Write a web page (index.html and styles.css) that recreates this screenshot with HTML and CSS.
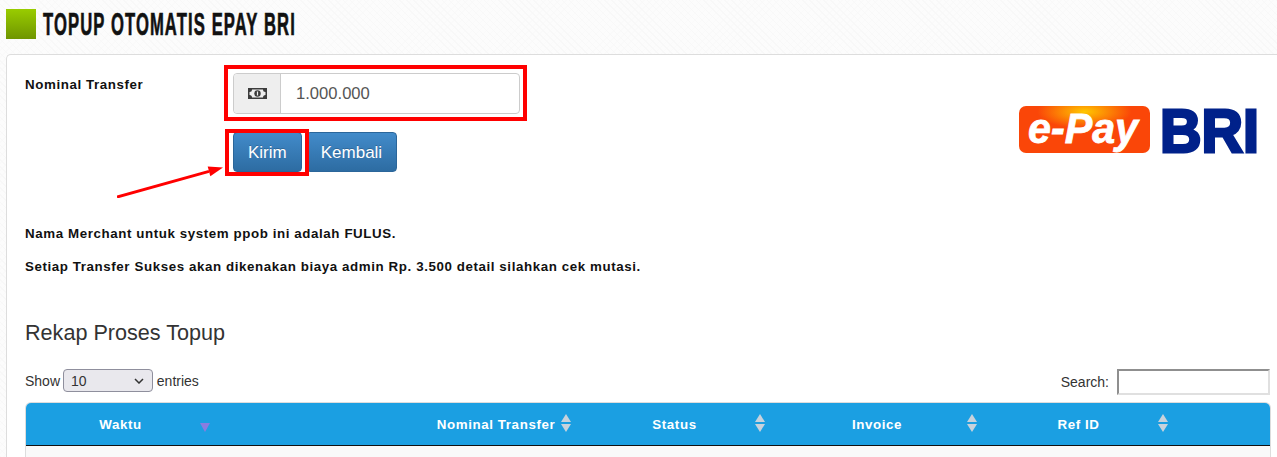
FILE: index.html
```html
<html>
<head>
    <meta name="viewport" content="width=device-width, initial-scale=1" />
<title>Topup Otomatis Epay BRI</title>
<link rel="stylesheet" href="styles.css">
</head>

<body>

<h1 class="page_title"><span class="title_box"></span><span class="title_text">TOPUP OTOMATIS EPAY BRI</span></h1>

<div class="panel">
    <div class="top">
        <div class="form">
            <label class="field_label">Nominal Transfer</label>
            <div class="field_side">
                <div class="input_group">
                    <span class="addon">
                        <svg width="19" height="11" viewBox="0 0 19 11"><path fill="#3c3c3c" fill-rule="evenodd" d="M0 0h19v11H0zM4 1.5a2.5 2.5 0 0 1-2.5 2.5v3a2.5 2.5 0 0 1 2.5 2.5h11a2.5 2.5 0 0 1 2.5-2.5V4a2.5 2.5 0 0 1-2.5-2.5z"/><circle cx="9.5" cy="5.5" r="3.2" fill="#3c3c3c"/><rect x="8.9" y="3.5" width="1.2" height="4" fill="#f0f0f0"/></svg>
                    </span>
                    <input class="amount" type="text" value="1.000.000">
                </div>
                <div class="buttons">
                    <span class="mark_btn"><button class="btn">Kirim</button></span><button class="btn">Kembali</button>
                </div>
            </div>
        </div>
        <svg class="logo" width="250" height="74" viewBox="0 -12 250 74">
            <defs>
                <radialGradient id="glow" cx="0.5" cy="0.12" r="0.36">
                    <stop offset="0" stop-color="#ffc800"/>
                    <stop offset="1" stop-color="#fa4608"/>
                </radialGradient>
            </defs>
            <rect x="0" y="1" width="131" height="47" rx="7" fill="url(#glow)"/>
            <text class="logo_epay" x="9" y="38" textLength="110" lengthAdjust="spacingAndGlyphs">e-Pay</text>
            <text class="logo_bri" x="141" y="46.5" textLength="99" lengthAdjust="spacingAndGlyphs">BRI</text>
        </svg>
    </div>

    <svg class="arrow" width="110" height="34" viewBox="0 0 110 34"><path d="M0 33 92 7.4" stroke="#f00" stroke-width="3"/><path d="M106 3.6 90.7 2.6 93.3 12.2z" fill="#f00"/></svg>

    <p class="note">Nama Merchant untuk system ppob ini adalah FULUS.</p>
    <p class="note">Setiap Transfer Sukses akan dikenakan biaya admin Rp. 3.500 detail silahkan cek mutasi.</p>

    <h3 class="section_title">Rekap Proses Topup</h3>

    <div class="table_tools">
        <label>Show
            <select class="entries"><option>10</option></select>
            entries</label>
        <label class="search">Search: <input type="text"></label>
    </div>

    <table class="rekap">
        <thead>
            <tr>
                <th class="c1">Waktu<span class="sort_active"></span></th>
                <th class="c2">Nominal Transfer<span class="sort"></span></th>
                <th class="c3">Status<span class="sort"></span></th>
                <th class="c4">Invoice<span class="sort"></span></th>
                <th class="c5">Ref ID<span class="sort"></span></th>
                <th class="c6"></th>
            </tr>
        </thead>
        <tbody>
            <tr><td></td><td></td><td></td><td></td><td></td><td></td></tr>
        </tbody>
    </table>
</div>

</body>
</html>
```

FILE: styles.css
```css
html, body { height: 457px; overflow: hidden; }
body { margin: 0; padding: 0 0 0 6px; background-color: #fcfcfc; background-image: repeating-linear-gradient(45deg, #f8f8f8 0 1px, transparent 1px 5px), repeating-linear-gradient(-45deg, #fafafa 0 1px, transparent 1px 5px); font-family: "Liberation Sans", Arial, sans-serif; color: #222; }

.page_title { display: flex; align-items: center; margin: 0; height: 54px; padding-bottom: 6px; box-sizing: border-box; font-size: 32px; line-height: 30px; font-weight: bold; color: #111; overflow: hidden; }
.title_box { width: 30px; height: 30px; margin-right: 7px; background: linear-gradient(#99cc00, #6f9500); flex: none; }
.title_text { display: inline-block; transform-origin: left center; transform: scaleX(0.52); white-space: nowrap; letter-spacing: 2.1px; -webkit-text-stroke: 0.7px #111; }

.panel { position: relative; box-sizing: border-box; width: 1271px; height: 403px; padding: 18px 0 0 18px; background: #fff; border: 1px solid #ddd; border-right: none; border-bottom: none; border-radius: 5px 0 0 0; overflow: hidden; }

.top { display: flex; width: 1244px; height: 130px; }
.form { display: flex; flex: 1; }
.field_label { width: 208px; padding-top: 4px; font-size: 13.33px; font-weight: bold; letter-spacing: 0.59px; color: #111; }

.input_group { position: relative; display: flex; width: 287px; height: 41px; box-sizing: border-box; border: 1px solid #ccc; border-radius: 4px; background: #fff; }
.addon { display: flex; align-items: center; justify-content: center; width: 47px; box-sizing: border-box; background: #eee; border-right: 1px solid #ccc; border-radius: 4px 0 0 4px; }
.amount { flex: 1; min-width: 0; padding: 0 15px; border: none; background: none; font-family: inherit; font-size: 16.6px; color: #555; outline: none; }

.buttons { display: flex; margin-top: 18px; }
.btn { display: block; height: 40px; padding: 2px 14px 0; color: #fff; font-family: inherit; font-size: 17px; background: linear-gradient(#428bca, #2d6ca2); border: 1px solid #2b669a; border-radius: 4px; text-shadow: 0 -1px 0 rgba(0,0,0,.2); }

/* red annotation frames drawn over the form */
.input_group:after { content: ""; position: absolute; top: -9px; left: -10px; right: -8px; bottom: -8px; border: 4px solid #f00; }
.mark_btn { display: block; position: relative; margin-right: 4px; }
.mark_btn:after { content: ""; position: absolute; top: -3px; left: -8px; right: -7px; bottom: -4px; border: 4px solid #f00; }

.logo { margin-top: 20px; flex: none; }
.logo_epay { font-weight: bold; font-style: italic; font-size: 43px; fill: #fff; stroke: #fff; stroke-width: 0.8px; }
.logo_bri { font-weight: bold; font-size: 62px; fill: #00218a; stroke: #00218a; stroke-width: 3px; }

.arrow { position: absolute; left: 110px; top: 109px; }

.note { margin: 0 0 19px; font-size: 13.33px; line-height: 14px; font-weight: bold; letter-spacing: 0.59px; color: #111; }
.top + .arrow + .note { margin-top: 24px; }

.section_title { margin: 46px 0 0; font-size: 21.6px; line-height: 26px; font-weight: normal; color: #333; }

.table_tools { display: flex; justify-content: space-between; align-items: flex-start; width: 1245px; margin-top: 23px; font-size: 14px; color: #333; }
.entries { appearance: none; width: 90px; height: 23px; margin: 0 0 0 -1px; padding-left: 7px; font-family: inherit; font-size: 14px; color: #333; background: #e9e8ed url("data:image/svg+xml,%3Csvg xmlns='http://www.w3.org/2000/svg' width='10' height='6'%3E%3Cpath d='M1 1l4 4 4-4' fill='none' stroke='%23333' stroke-width='1.5'/%3E%3C/svg%3E") no-repeat right 8px center; border: 1px solid #8f8f9d; border-radius: 4px; }
.search { display: flex; align-items: center; gap: 8px; }
.search input { width: 153px; height: 26px; box-sizing: border-box; padding: 2px; border: 2px solid; border-color: #8f8f8f #e0e0e0 #e0e0e0 #8f8f8f; background: #fff; }

.rekap { width: 1246px; margin-top: 7px; border: 1px solid #ddd; border-bottom: none; border-radius: 6px 6px 0 0; border-collapse: separate; border-spacing: 0; table-layout: fixed; font-size: 13.33px; }
.rekap th { position: relative; box-sizing: border-box; height: 43px; padding: 0; background: #1b9fe2; color: #fff; text-align: center; letter-spacing: 0.6px; border-bottom: 1px solid #111; }
.rekap th.c1 { width: 189px; border-top-left-radius: 5px; }
.rekap th.c2 { width: 361px; padding-left: 201px; }
.rekap th.c3 { width: 194px; padding-left: 3px; }
.rekap th.c4 { width: 212px; padding-left: 2px; }
.rekap th.c5 { width: 191px; padding-left: 2px; }
.rekap th.c6 { border-top-right-radius: 5px; }
.rekap td { height: 11px; background: #f9f9f9; }

.sort, .sort_active { position: absolute; right: 5px; top: 11px; width: 0; height: 0; border-left: 5px solid transparent; border-right: 5px solid transparent; }
.sort { border-bottom: 8px solid #c8d2dc; }
.sort:after { content: ""; position: absolute; left: -5px; top: 10px; width: 0; height: 0; border-left: 5px solid transparent; border-right: 5px solid transparent; border-top: 8px solid #c8d2dc; }
.sort_active { top: 20px; border-top: 9px solid #8a7ce0; }
```
